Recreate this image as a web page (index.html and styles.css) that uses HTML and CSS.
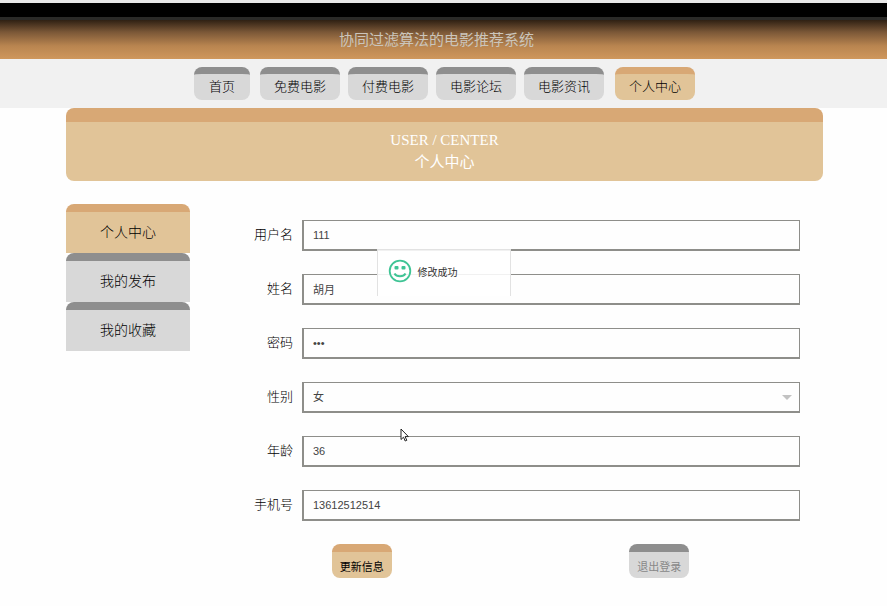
FILE: index.html
```
<!DOCTYPE html>
<html lang="zh-CN">
<head>
  <meta charset="UTF-8">
  <meta name="viewport" content="width=device-width, initial-scale=1.0">
  <title>个人中心</title>
  <link rel="stylesheet" href="styles.css">
</head>
<body>
  <header class="header">
    <h1 class="site-title">协同过滤算法的电影推荐系统</h1>
  </header>

  <nav class="nav">
    <a class="nav-home" href="#">首页</a>
    <a href="#">免费电影</a>
    <a href="#">付费电影</a>
    <a href="#">电影论坛</a>
    <a href="#">电影资讯</a>
    <a class="nav-user active" href="#">个人中心</a>
  </nav>

  <div class="container">
    <div class="banner">
      <p class="banner-en">USER / CENTER</p>
      <h2 class="banner-cn">个人中心</h2>
    </div>

    <div class="content">
      <aside class="sidebar">
        <a class="active" href="#">个人中心</a>
        <a href="#">我的发布</a>
        <a href="#">我的收藏</a>
      </aside>

      <form class="form">
        <div class="field">
          <label for="username">用户名</label>
          <input type="text" id="username" value="111">
        </div>
        <div class="field">
          <label for="realname">姓名</label>
          <input type="text" id="realname" value="胡月">
        </div>
        <div class="field">
          <label for="password">密码</label>
          <input type="password" id="password" value="123">
        </div>
        <div class="field">
          <label for="gender">性别</label>
          <div class="select-box">
            <select id="gender">
              <option>女</option>
              <option>男</option>
            </select>
            <span class="arrow"></span>
          </div>
        </div>
        <div class="field">
          <label for="age">年龄</label>
          <input type="text" id="age" value="36">
        </div>
        <div class="field">
          <label for="phone">手机号</label>
          <input type="text" id="phone" value="13612512514">
        </div>
        <div class="actions">
          <button type="button" class="btn btn-update">更新信息</button>
          <button type="button" class="btn btn-logout">退出登录</button>
        </div>
      </form>
    </div>
  </div>

  <div class="toast" role="status">
    <svg class="smile" width="24" height="24" viewBox="0 0 24 24" fill="none" stroke="#3fc495" stroke-width="2">
      <circle cx="12" cy="12" r="10.3" stroke-width="1.8"/>
      <path d="M6.500 14.500c2 3.600 9 3.600 11 0"/>
      <rect x="6.500" y="7" width="4" height="3.500" rx="1" fill="#3fc495" stroke="none"/>
      <rect x="13.500" y="7" width="4" height="3.500" rx="1" fill="#3fc495" stroke="none"/>
    </svg>
    <span>修改成功</span>
  </div>

  <svg class="cursor" width="10" height="14" viewBox="0 0 10 14">
    <path d="M1 1v10.500l2.500-2.300 1.700 3.800 1.600-.7-1.700-3.700h3.300z" fill="#fff" stroke="#222" stroke-width="1"/>
  </svg>
</body>
</html>
```

FILE: styles.css
```
* {
  box-sizing: border-box;
}
body {
  margin: 0;
  position: relative;
  background: #fefefe;
  color: #000;
  font-family: "Liberation Sans", "Noto Sans CJK SC", sans-serif;
  font-size: 13px;
}
a {
  color: #000;
  text-decoration: none;
}

/* header */
.header {
  height: 59px;
  padding: 20px 14px 0 0;
  background: linear-gradient(to bottom, #e8e8e8 3px, #000 3px, #000 17px, #2a2a28 17px, #2a2a28 20px, #2f2013 20px, #7a5737 32px, #b98550 46px, #cf975c 59px);
}
.site-title {
  margin: 0;
  text-align: center;
  font-size: 15px;
  font-weight: 400;
  line-height: 39px;
  color: #cbc5bb;
}

/* nav */
.nav {
  display: flex;
  justify-content: center;
  gap: 8px;
  padding: 8px 0 8px 2px;
  background: #f1f1f1;
}
.nav a {
  width: 80px;
  height: 33px;
  border-top: 7px solid #8e8e8e;
  border-radius: 8px;
  background: #d8d8d8;
  line-height: 26px;
  text-align: center;
}
.nav .nav-home {
  width: 56px;
  margin-right: 2px;
}
.nav .nav-user {
  margin-left: 3px;
}
.nav .active,
.sidebar .active {
  border-top-color: #d8a875;
  background: #e1c498;
}

.container {
  padding: 0 64px 0 66px;
}
.banner {
  height: 73px;
  padding-top: 8px;
  border-top: 14px solid #d8a875;
  border-radius: 8px;
  background: #e1c498;
  color: #fff;
  text-align: center;
  line-height: 21px;
}
.banner-en,
.banner-cn {
  margin: 0;
  font-size: 15px;
  font-weight: 400;
}
.banner-en {
  font-family: "Liberation Serif", serif;
}

.content {
  display: flex;
  gap: 23px;
  margin-top: 23px;
}
.sidebar {
  width: 124px;
}
.sidebar a {
  display: block;
  height: 49px;
  border-top: 8px solid #8e8e8e;
  border-radius: 8px 8px 0 0;
  background: #d8d8d8;
  font-size: 14px;
  line-height: 41px;
  text-align: center;
}
.nav a,
.sidebar a,
.field label {
  font-weight: 300;
}

/* form */
.form {
  flex: 1;
  padding: 16px 15px 0 0;
}
.field {
  display: flex;
  gap: 9px;
  margin-bottom: 23px;
  padding-right: 8px;
}
.field label {
  width: 80px;
  line-height: 29px;
  text-align: right;
}
.field input,
.field select {
  flex: 1;
  width: 100%;
  height: 31px;
  margin: 0;
  padding: 0 9px;
  border: solid #8e8e8a;
  border-width: 1px 1px 2px 2px;
  border-radius: 0;
  background: #fefefe;
  color: #444;
  font-family: inherit;
  font-size: 11px;
  appearance: none;
  outline: none;
}
.select-box {
  flex: 1;
  display: flex;
  position: relative;
}
.arrow {
  position: absolute;
  top: 13px;
  right: 8px;
  border: 5px solid transparent;
  border-top-color: #c2c2c2;
  border-bottom: none;
  pointer-events: none;
}

.actions {
  display: flex;
  justify-content: space-around;
}
.btn {
  width: 60px;
  height: 34px;
  padding: 2px 0 0;
  border: none;
  border-top: 8px solid #d8a875;
  border-radius: 8px;
  background: #e1c498;
  color: #000;
  font-family: inherit;
  font-size: 11px;
  cursor: pointer;
}
.btn-logout {
  border-top-color: #8e8e8e;
  background: #d8d8d8;
  color: #888;
}

/* message shown after saving */
.toast {
  position: absolute;
  top: 249px;
  left: 50%;
  display: flex;
  align-items: center;
  gap: 6px;
  width: 134px;
  height: 47px;
  margin-left: -67px;
  padding: 0 0 4px 10px;
  border: 1px solid #e2e2e2;
  border-bottom: none;
  background: rgba(255, 255, 255, 0.88);
  color: #333;
  font-size: 10px;
}
.cursor {
  position: absolute;
  top: 428px;
  left: 400px;
}
```
